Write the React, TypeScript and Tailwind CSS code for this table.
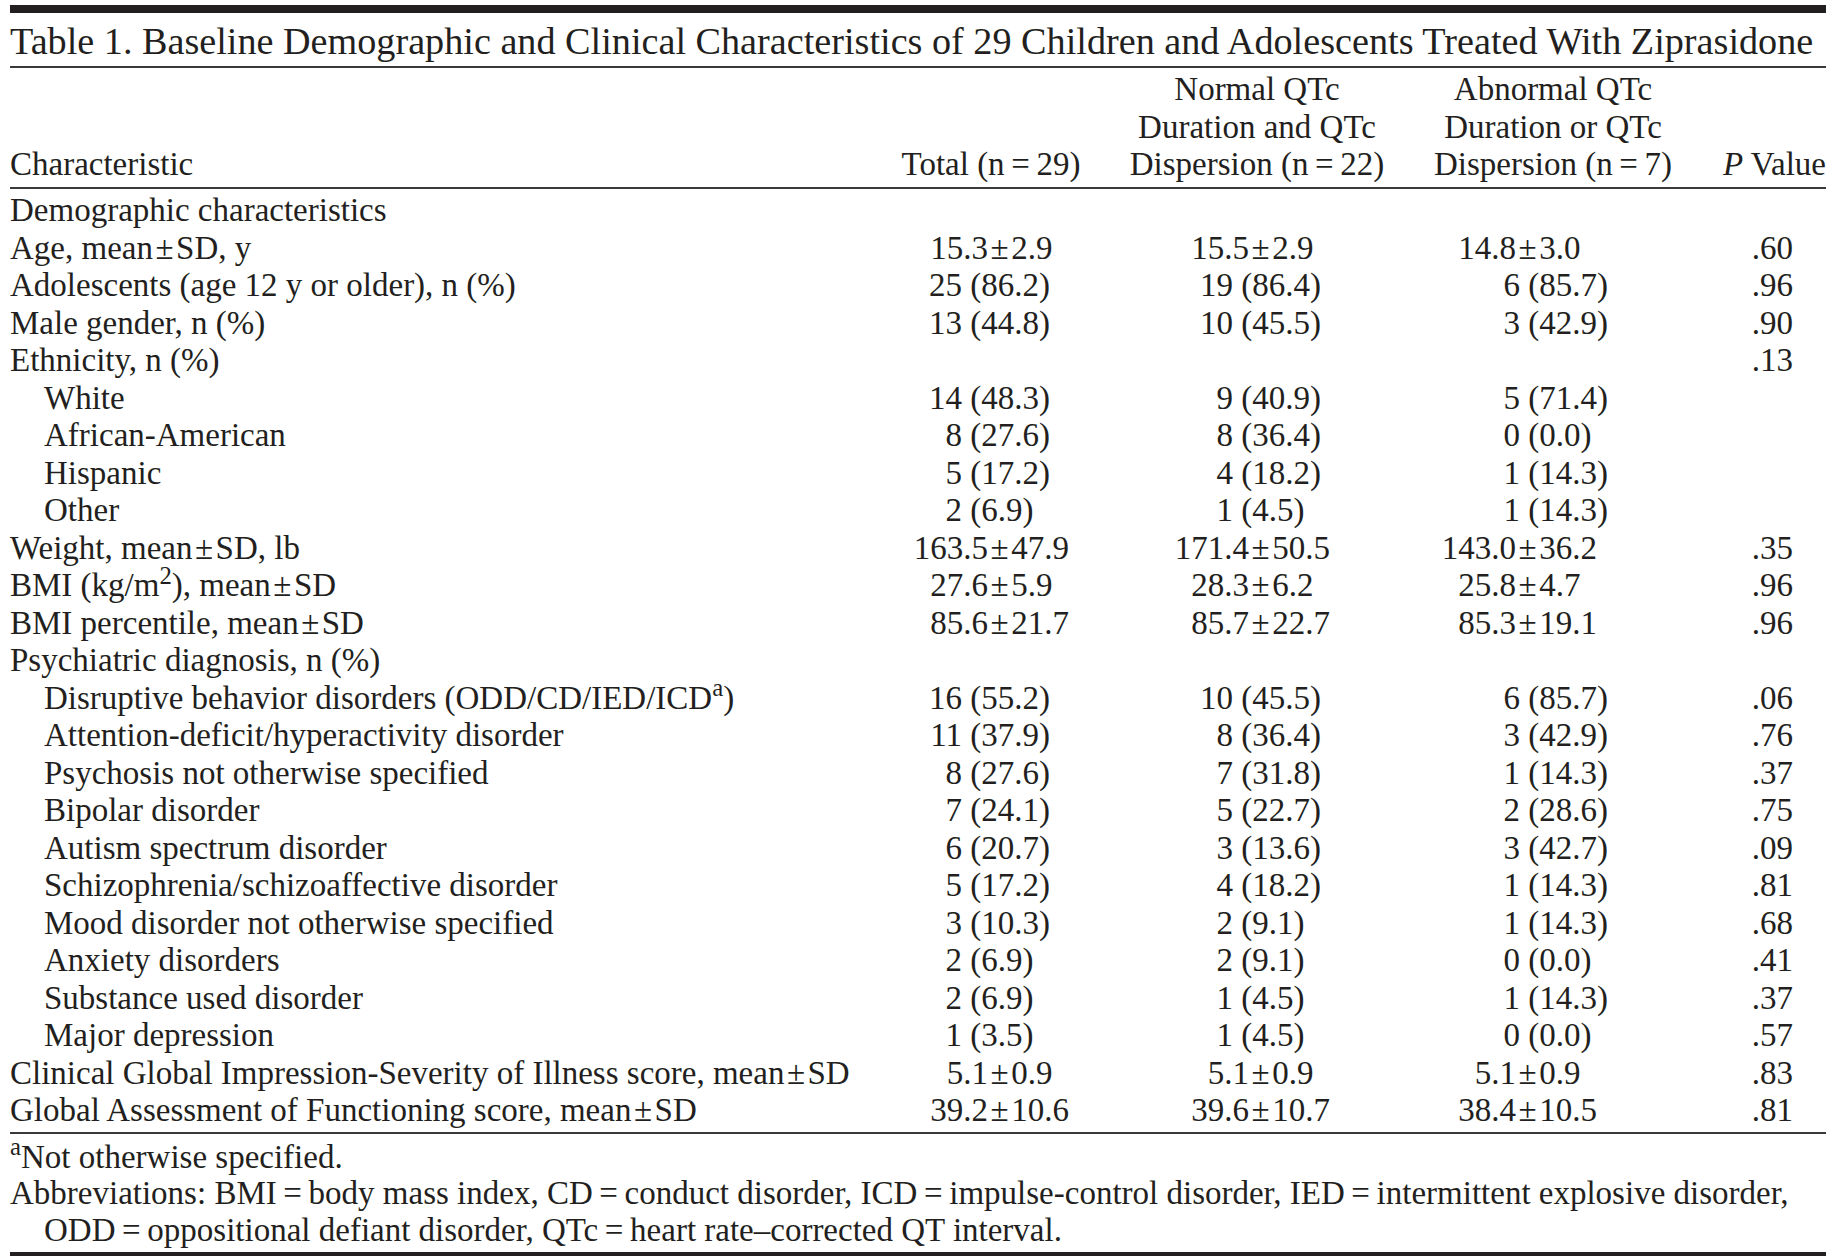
import React from "react";

type Row = {
  label: React.ReactNode;
  indent?: boolean;
  v?: [string, string, string];
  p?: string;
};

const Pm = () => <span className="mx-[2.5px]">±</span>;
const EQ = "\u2009=\u2009";

const rows: Row[] = [
  { label: "Demographic characteristics" },
  { label: <>Age, mean<Pm />SD, y</>, v: ["15.3 ± 2.9", "15.5 ± 2.9", "14.8 ± 3.0"], p: ".60" },
  { label: "Adolescents (age 12 y or older), n (%)", v: ["25 (86.2)", "19 (86.4)", "6 (85.7)"], p: ".96" },
  { label: "Male gender, n (%)", v: ["13 (44.8)", "10 (45.5)", "3 (42.9)"], p: ".90" },
  { label: "Ethnicity, n (%)", p: ".13" },
  { label: "White", indent: true, v: ["14 (48.3)", "9 (40.9)", "5 (71.4)"] },
  { label: "African-American", indent: true, v: ["8 (27.6)", "8 (36.4)", "0 (0.0)"] },
  { label: "Hispanic", indent: true, v: ["5 (17.2)", "4 (18.2)", "1 (14.3)"] },
  { label: "Other", indent: true, v: ["2 (6.9)", "1 (4.5)", "1 (14.3)"] },
  { label: <>Weight, mean<Pm />SD, lb</>, v: ["163.5 ± 47.9", "171.4 ± 50.5", "143.0 ± 36.2"], p: ".35" },
  {
    label: (
      <>
        BMI (kg/m<sup>2</sup>), mean<Pm />SD
      </>
    ),
    v: ["27.6 ± 5.9", "28.3 ± 6.2", "25.8 ± 4.7"],
    p: ".96",
  },
  { label: <>BMI percentile, mean<Pm />SD</>, v: ["85.6 ± 21.7", "85.7 ± 22.7", "85.3 ± 19.1"], p: ".96" },
  { label: "Psychiatric diagnosis, n (%)" },
  {
    label: (
      <>
        Disruptive behavior disorders (ODD/CD/IED/ICD<sup>a</sup>)
      </>
    ),
    indent: true,
    v: ["16 (55.2)", "10 (45.5)", "6 (85.7)"],
    p: ".06",
  },
  { label: "Attention-deficit/hyperactivity disorder", indent: true, v: ["11 (37.9)", "8 (36.4)", "3 (42.9)"], p: ".76" },
  { label: "Psychosis not otherwise specified", indent: true, v: ["8 (27.6)", "7 (31.8)", "1 (14.3)"], p: ".37" },
  { label: "Bipolar disorder", indent: true, v: ["7 (24.1)", "5 (22.7)", "2 (28.6)"], p: ".75" },
  { label: "Autism spectrum disorder", indent: true, v: ["6 (20.7)", "3 (13.6)", "3 (42.7)"], p: ".09" },
  { label: "Schizophrenia/schizoaffective disorder", indent: true, v: ["5 (17.2)", "4 (18.2)", "1 (14.3)"], p: ".81" },
  { label: "Mood disorder not otherwise specified", indent: true, v: ["3 (10.3)", "2 (9.1)", "1 (14.3)"], p: ".68" },
  { label: "Anxiety disorders", indent: true, v: ["2 (6.9)", "2 (9.1)", "0 (0.0)"], p: ".41" },
  { label: "Substance used disorder", indent: true, v: ["2 (6.9)", "1 (4.5)", "1 (14.3)"], p: ".37" },
  { label: "Major depression", indent: true, v: ["1 (3.5)", "1 (4.5)", "0 (0.0)"], p: ".57" },
  {
    label: <>Clinical Global Impression-Severity of Illness score, mean<Pm />SD</>,
    v: ["5.1 ± 0.9", "5.1 ± 0.9", "5.1 ± 0.9"],
    p: ".83",
  },
  {
    label: <>Global Assessment of Functioning score, mean<Pm />SD</>,
    v: ["39.2 ± 10.6", "39.6 ± 10.7", "38.4 ± 10.5"],
    p: ".81",
  },
];

// anchor grids per column: [count-anchor, mean-anchor]
const anchors: [string, string][] = [
  ["grid grid-cols-[72px_1fr]", "grid grid-cols-[98px_1fr]"],
  ["grid grid-cols-[141px_1fr]", "grid grid-cols-[157px_1fr]"],
  ["grid grid-cols-[98px_1fr]", "grid grid-cols-[94px_1fr]"],
];

function Value({ text, col }: { text: string; col: number }) {
  const isMean = text.includes("±");
  if (isMean) {
    const [a, b] = text.split("±");
    return (
      <div className={anchors[col][1]}>
        <span className="text-right whitespace-pre">{a.trim()}</span>
        <span className="whitespace-pre">
          <Pm />
          {b.trim()}
        </span>
      </div>
    );
  }
  const i = text.indexOf(" (");
  return (
    <div className={anchors[col][0]}>
      <span className="text-right whitespace-pre">{text.slice(0, i)}</span>
      <span className="whitespace-pre">{text.slice(i)}</span>
    </div>
  );
}

export default function App() {
  return (
    <div className="w-[1838px] h-[1260px] bg-white pt-[5px] pl-[10px] pr-[12px] text-[#231f20] font-['Liberation_Serif',serif]">
      <div className="h-[8px] bg-[#231f20]" />
      <div className="pt-[4px] leading-[49px] text-[38.2px] whitespace-nowrap">
        Table 1. Baseline Demographic and Clinical Characteristics of 29 Children and Adolescents Treated With Ziprasidone
      </div>
      <div className="h-[2px] bg-[#3a3a3a]" />

      {/* Header */}
      <div className="pt-[3px] pb-[3.5px] grid grid-cols-[880px_202px_330px_262px_142px] items-end text-[33px] leading-[37.5px]">
        <div>Characteristic</div>
        <div className="text-center whitespace-nowrap">Total (n{EQ}29)</div>
        <div className="text-center whitespace-nowrap">
          Normal QTc
          <br />
          Duration and QTc
          <br />
          Dispersion (n{EQ}22)
        </div>
        <div className="text-center whitespace-nowrap">
          Abnormal QTc
          <br />
          Duration or QTc
          <br />
          Dispersion (n{EQ}7)
        </div>
        <div className="text-right whitespace-nowrap">
          <i>P</i> Value
        </div>
      </div>
      <div className="h-[2px] bg-[#3a3a3a]" />

      {/* Body */}
      <div className="pt-[3px] pb-[2px] text-[33px] leading-[37.5px]">
        {rows.map((r, i) => (
          <div key={i} className="grid grid-cols-[880px_202px_330px_262px_142px]">
            <div className={r.indent ? "pl-[34px] whitespace-nowrap" : "whitespace-nowrap"}>{r.label}</div>
            {[0, 1, 2].map((c) => (
              <div key={c}>{r.v ? <Value text={r.v[c]} col={c} /> : null}</div>
            ))}
            <div className="text-right pr-[33px]">{r.p ?? ""}</div>
          </div>
        ))}
      </div>
      <div className="h-[2px] bg-[#3a3a3a]" />

      {/* Footnotes */}
      <div className="pt-[5px] pb-[3.5px] text-[33px] leading-[36.5px]">
        <div className="whitespace-nowrap">
          <sup>a</sup>Not otherwise specified.
        </div>
        <div className="whitespace-nowrap">
          Abbreviations: BMI{EQ}body mass index, CD{EQ}conduct disorder, ICD{EQ}impulse-control disorder, IED{EQ}intermittent explosive disorder,
        </div>
        <div className="pl-[34px] whitespace-nowrap">
          ODD{EQ}oppositional defiant disorder, QTc{EQ}heart rate–corrected QT interval.
        </div>
      </div>
      <div className="h-[4px] bg-[#231f20]" />
    </div>
  );
}
